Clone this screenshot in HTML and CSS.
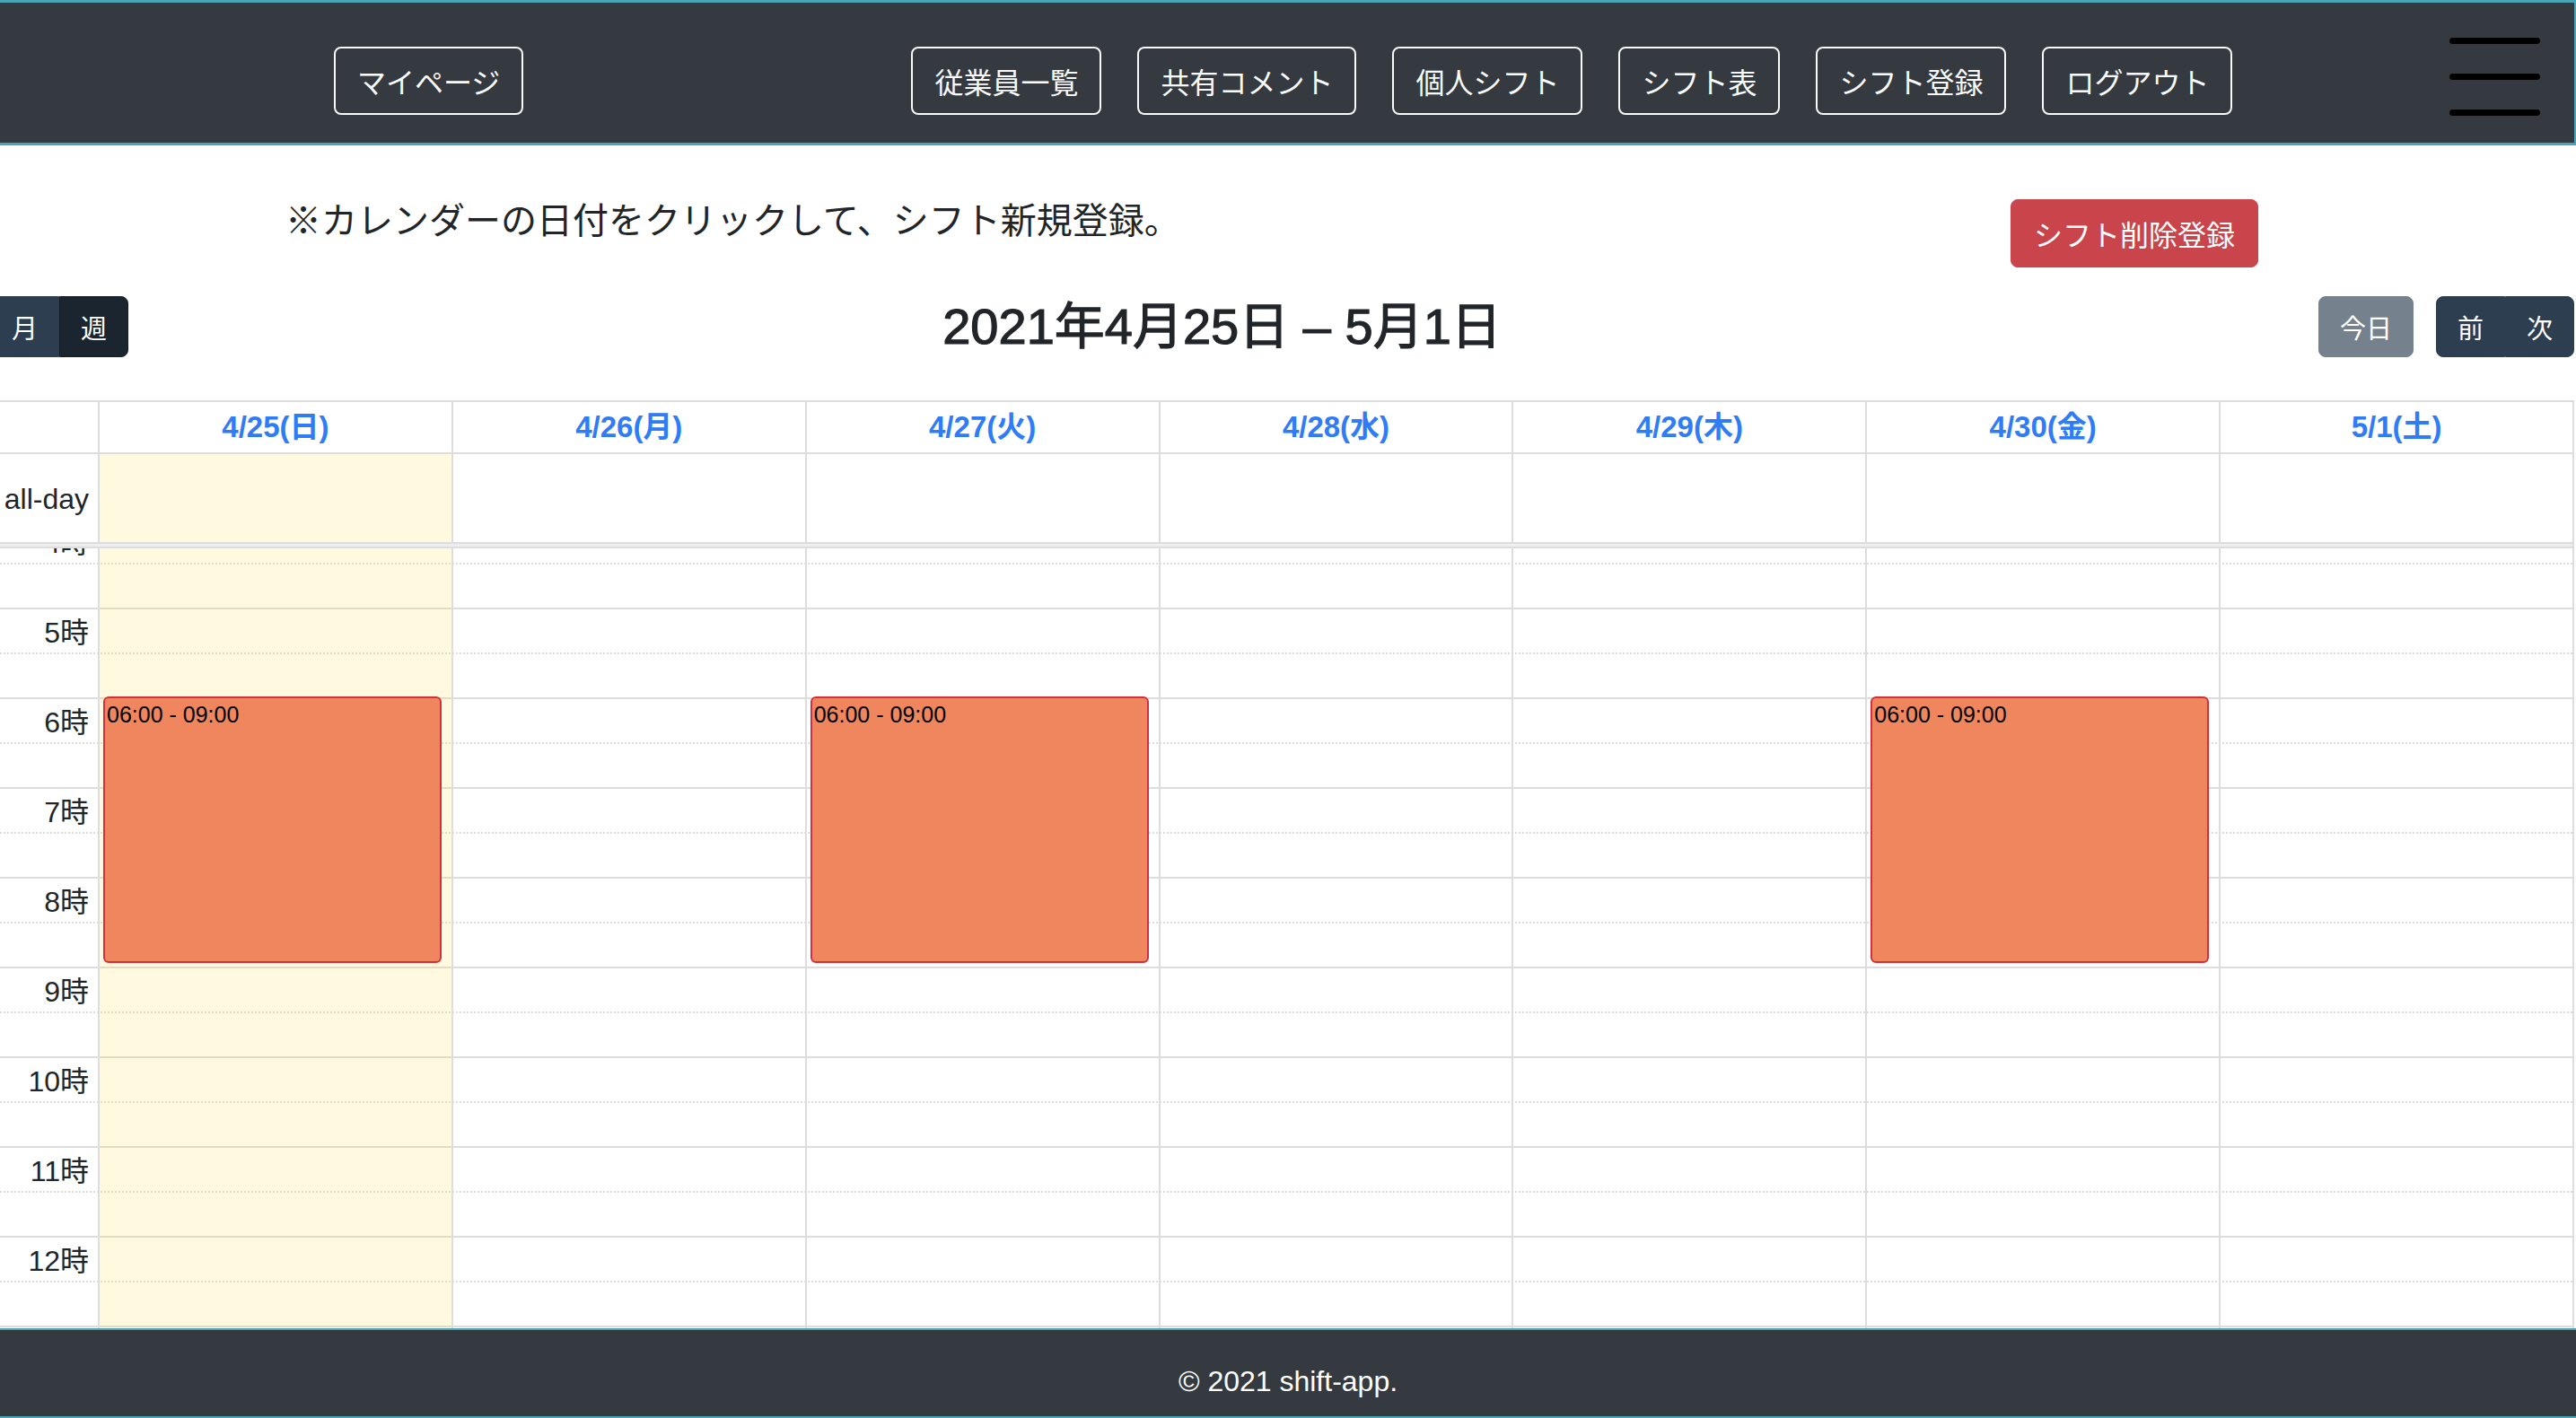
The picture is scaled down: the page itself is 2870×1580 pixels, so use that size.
FILE: index.html
```html
<!DOCTYPE html>
<html lang="ja">
<head>
<meta charset="utf-8">
<title>shift-app</title>
<link rel="stylesheet" href="styles.css">
</head>
<body>
<header class="site-header">
  <a class="nav-btn">マイページ</a>
  <nav class="nav-group">
    <a class="nav-btn">従業員一覧</a>
    <a class="nav-btn">共有コメント</a>
    <a class="nav-btn">個人シフト</a>
    <a class="nav-btn">シフト表</a>
    <a class="nav-btn">シフト登録</a>
    <a class="nav-btn">ログアウト</a>
  </nav>
  <div class="hamburger"><span></span><span></span><span></span></div>
</header>

<main class="main">
  <div class="notice-row">
    <p class="notice">※カレンダーの日付をクリックして、シフト新規登録。</p>
    <a class="btn-danger">シフト削除登録</a>
  </div>

  <section class="calendar">
    <div class="toolbar">
      <div class="chunk chunk-left">
        <div class="btn-group">
          <button class="fc-btn">月</button><button class="fc-btn active">週</button>
        </div>
      </div>
      <h2 class="title">2021年4月25日 – 5月1日</h2>
      <div class="chunk chunk-right">
        <button class="fc-btn today" disabled>今日</button>
        <div class="btn-group">
          <button class="fc-btn">前</button><button class="fc-btn">次</button>
        </div>
      </div>
    </div>

    <div class="grid">
      <div class="head-row">
        <div class="axis"></div>
        <div class="day-head">4/25(日)</div>
        <div class="day-head">4/26(月)</div>
        <div class="day-head">4/27(火)</div>
        <div class="day-head">4/28(水)</div>
        <div class="day-head">4/29(木)</div>
        <div class="day-head">4/30(金)</div>
        <div class="day-head">5/1(土)</div>
      </div>
      <div class="allday-row">
        <div class="axis allday-label">all-day</div>
        <div class="allday-cell today-bg"></div>
        <div class="allday-cell"></div>
        <div class="allday-cell"></div>
        <div class="allday-cell"></div>
        <div class="allday-cell"></div>
        <div class="allday-cell"></div>
        <div class="allday-cell"></div>
      </div>
      <div class="divider"></div>
      <div class="body">
        <div class="body-inner">
          <div class="slot hour"><div class="slot-label">4時</div></div>
          <div class="slot half"></div>
          <div class="slot hour"><div class="slot-label">5時</div></div>
          <div class="slot half"></div>
          <div class="slot hour"><div class="slot-label">6時</div></div>
          <div class="slot half"></div>
          <div class="slot hour"><div class="slot-label">7時</div></div>
          <div class="slot half"></div>
          <div class="slot hour"><div class="slot-label">8時</div></div>
          <div class="slot half"></div>
          <div class="slot hour"><div class="slot-label">9時</div></div>
          <div class="slot half"></div>
          <div class="slot hour"><div class="slot-label">10時</div></div>
          <div class="slot half"></div>
          <div class="slot hour"><div class="slot-label">11時</div></div>
          <div class="slot half"></div>
          <div class="slot hour"><div class="slot-label">12時</div></div>
          <div class="slot half"></div>
          <div class="slot hour"><div class="slot-label">13時</div></div>

          <div class="cols">
            <div class="col-axis"></div>
            <div class="col today-bg"><div class="event">06:00 - 09:00</div></div>
            <div class="col"></div>
            <div class="col"><div class="event">06:00 - 09:00</div></div>
            <div class="col"></div>
            <div class="col"></div>
            <div class="col"><div class="event">06:00 - 09:00</div></div>
            <div class="col"></div>
          </div>
        </div>
      </div>
    </div>
  </section>
</main>

<footer class="site-footer">© 2021 shift-app.</footer>
</body>
</html>
```
FILE: styles.css
```css
* { box-sizing: border-box; }

html, body {
  margin: 0;
  padding: 0;
  overflow: hidden;
}

body {
  width: 2870px;
  height: 1580px;
  font-family: "Liberation Sans", "Noto Sans CJK JP", sans-serif;
  color: #212529;
  background: #fff;
}

/* ---------- header ---------- */
.site-header {
  height: 162px;
  background: #343a40;
  border-top: 3px solid #4ba3b6;
  border-bottom: 3px solid #4ba3b6;
  border-right: 2px solid #4ba3b6;
  display: flex;
  align-items: flex-start;
  padding-top: 39px;
  padding-left: 372px;
}

.nav-group {
  display: flex;
  gap: 40px;
  margin-left: 432px;
}

.nav-btn {
  display: inline-block;
  margin-top: 10px;
  font-family: "Noto Sans CJK JP", sans-serif;
  font-size: 32px;
  line-height: 48px;
  padding: 12px 24px;
  border: 2px solid #f8f9fa;
  border-radius: 8px;
  color: #f8f9fa;
  white-space: nowrap;
}

.hamburger {
  margin-left: auto;
  margin-right: 38px;
  display: flex;
  flex-direction: column;
  gap: 33px;
}
.hamburger span {
  display: block;
  width: 101px;
  height: 7px;
  background: #000;
  border-radius: 4px;
}

/* ---------- notice row ---------- */
.notice-row {
  display: flex;
  align-items: flex-start;
  margin-top: 57px;
  height: 79px;
}

.notice {
  margin: 0 0 0 318px;
  font-family: "Noto Sans CJK JP", sans-serif;
  font-size: 40px;
  line-height: 48px;
  font-weight: 400;
  color: #212529;
}

.btn-danger {
  margin-left: auto;
  margin-right: 354px;
  margin-top: 3px;
  font-family: "Noto Sans CJK JP", sans-serif;
  font-size: 32px;
  line-height: 48px;
  padding: 13px 25px;
  border: 1px solid #ca444b;
  border-radius: 8px;
  background: #ca444b;
  color: #fff;
  white-space: nowrap;
}

/* ---------- calendar ---------- */
.calendar {
  margin-top: 32px;
  margin-left: -145px;
  width: 3013px;
}

.toolbar {
  display: grid;
  grid-template-columns: 1fr auto 1fr;
  align-items: center;
  height: 68px;
  margin-bottom: 48px;
}

.chunk { display: flex; align-items: center; }
.chunk-left { padding-left: 134px; }
.chunk-right { justify-content: flex-end; gap: 25px; }

.btn-group { display: flex; }

.fc-btn {
  font-family: "Noto Sans CJK JP", sans-serif;
  font-size: 29px;
  line-height: 44px;
  padding: 11px 23px;
  border: 1px solid #2c3e50;
  background: #2c3e50;
  color: #fff;
  border-radius: 8px;
  margin: 0;
}
.btn-group .fc-btn:first-child { border-top-right-radius: 0; border-bottom-right-radius: 0; }
.btn-group .fc-btn:last-child { border-top-left-radius: 0; border-bottom-left-radius: 0; }
.fc-btn.active { background: #1a252f; border-color: #151e27; }
.fc-btn.today { opacity: .65; }

.title {
  margin: 0;
  font-size: 56px;
  line-height: 68px;
  font-weight: 400;
  -webkit-text-stroke: 1.2px #212529;
  color: #212529;
  white-space: nowrap;
}

.grid {
  border-top: 2px solid #ddd;
  border-right: 2px solid #ddd;
}

.head-row,
.allday-row,
.cols {
  display: grid;
  grid-template-columns: 254px repeat(7, 1fr);
}

.head-row { border-bottom: 2px solid #ddd; }

.day-head {
  border-left: 2px solid #ddd;
  height: 56px;
  line-height: 56px;
  text-align: center;
  font-size: 33px;
  font-weight: 700;
  color: #2e7cf6;
  white-space: nowrap;
}

.allday-row { height: 98px; }
.allday-cell { border-left: 2px solid #ddd; }

.allday-label {
  display: flex;
  align-items: center;
  justify-content: flex-end;
  padding-right: 10px;
  font-size: 32px;
  padding-top: 2px;
}

.divider {
  height: 7px;
  background: #eee;
  border-top: 2px solid #ddd;
  border-bottom: 2px solid #ddd;
}

.today-bg { background: rgba(255, 220, 40, .15); }

.body {
  height: 869px;
  overflow: hidden;
}

.body-inner {
  position: relative;
  margin-top: -34px;
}

.slot {
  height: 50px;
  display: grid;
  grid-template-columns: 254px 1fr;
}
.slot.hour { border-top: 2px solid #ddd; }
.slot.half { border-top: 2px dotted #ddd; }

.slot-label {
  display: flex;
  align-items: center;
  justify-content: flex-end;
  padding-right: 10px;
  padding-bottom: 5px;
  font-size: 32px;
  color: #212529;
}

.cols {
  position: absolute;
  top: 0;
  left: 0;
  right: 0;
  bottom: 0;
}

.col {
  position: relative;
  border-left: 2px solid #ddd;
}

.event {
  position: absolute;
  top: 199px;
  height: 297px;
  left: 4px;
  right: 11px;
  background: #ef865e;
  border: 2px solid #d3303f;
  border-radius: 6px;
  padding: 3px 2px;
  font-size: 25px;
  line-height: 30px;
  color: #000;
  white-space: nowrap;
  overflow: hidden;
}

/* ---------- footer ---------- */
.site-footer {
  height: 100px;
  background: #343a40;
  border-top: 2px solid #4ba3b6;
  border-bottom: 2px solid #4ba3b6;
  padding-top: 33px;
  text-align: center;
  color: #fff;
  font-size: 32px;
  line-height: 48px;
}
```
